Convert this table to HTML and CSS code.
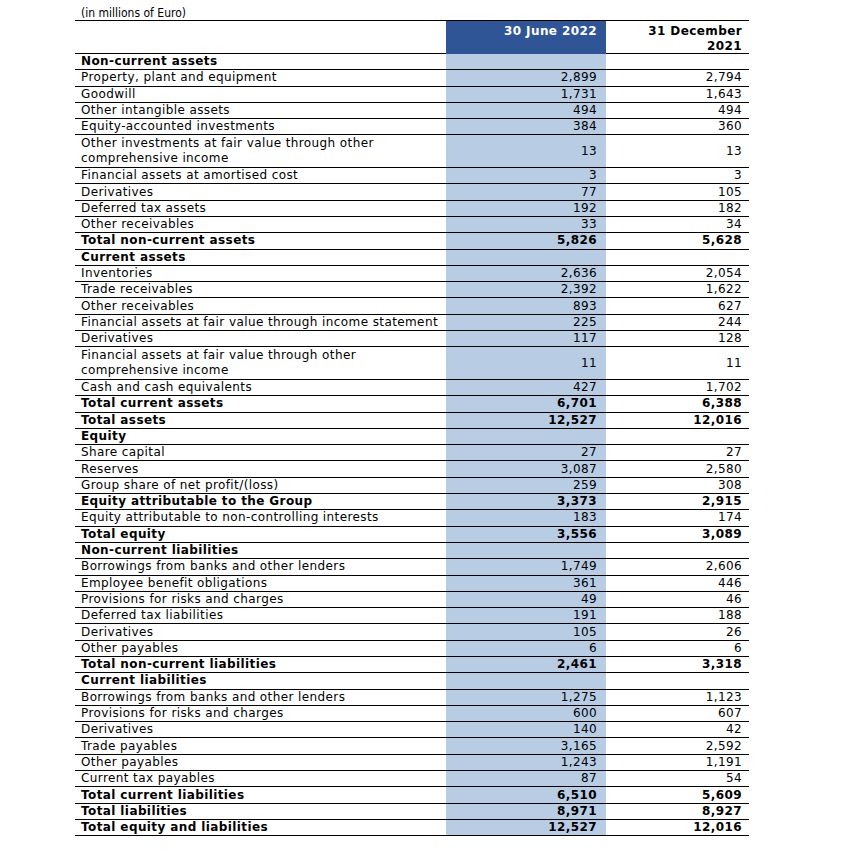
FILE: index.html
```html
<!DOCTYPE html>
<html>
<head>
<meta charset="utf-8">
<link rel="stylesheet" href="styles.css">
</head>
<body>
<div class="page">
  <div class="unit">(in millions of Euro)</div>
  <div class="table">
    <div class="row head">
      <div class="cell label"></div>
      <div class="cell cur hd">30 June 2022</div>
      <div class="cell prev hd">31 December<br>2021</div>
    </div>
    <div class="row b"><div class="cell label">Non-current assets</div><div class="cell cur"></div><div class="cell prev"></div></div>
    <div class="row"><div class="cell label">Property, plant and equipment</div><div class="cell cur">2,899</div><div class="cell prev">2,794</div></div>
    <div class="row"><div class="cell label">Goodwill</div><div class="cell cur">1,731</div><div class="cell prev">1,643</div></div>
    <div class="row"><div class="cell label">Other intangible assets</div><div class="cell cur">494</div><div class="cell prev">494</div></div>
    <div class="row"><div class="cell label">Equity-accounted investments</div><div class="cell cur">384</div><div class="cell prev">360</div></div>
    <div class="row tall"><div class="cell label">Other investments at fair value through other<br>comprehensive income</div><div class="cell cur">13</div><div class="cell prev">13</div></div>
    <div class="row"><div class="cell label">Financial assets at amortised cost</div><div class="cell cur">3</div><div class="cell prev">3</div></div>
    <div class="row"><div class="cell label">Derivatives</div><div class="cell cur">77</div><div class="cell prev">105</div></div>
    <div class="row"><div class="cell label">Deferred tax assets</div><div class="cell cur">192</div><div class="cell prev">182</div></div>
    <div class="row"><div class="cell label">Other receivables</div><div class="cell cur">33</div><div class="cell prev">34</div></div>
    <div class="row b"><div class="cell label">Total non-current assets</div><div class="cell cur">5,826</div><div class="cell prev">5,628</div></div>
    <div class="row b"><div class="cell label">Current assets</div><div class="cell cur"></div><div class="cell prev"></div></div>
    <div class="row"><div class="cell label">Inventories</div><div class="cell cur">2,636</div><div class="cell prev">2,054</div></div>
    <div class="row"><div class="cell label">Trade receivables</div><div class="cell cur">2,392</div><div class="cell prev">1,622</div></div>
    <div class="row"><div class="cell label">Other receivables</div><div class="cell cur">893</div><div class="cell prev">627</div></div>
    <div class="row"><div class="cell label">Financial assets at fair value through income statement</div><div class="cell cur">225</div><div class="cell prev">244</div></div>
    <div class="row"><div class="cell label">Derivatives</div><div class="cell cur">117</div><div class="cell prev">128</div></div>
    <div class="row tall"><div class="cell label">Financial assets at fair value through other<br>comprehensive income</div><div class="cell cur">11</div><div class="cell prev">11</div></div>
    <div class="row"><div class="cell label">Cash and cash equivalents</div><div class="cell cur">427</div><div class="cell prev">1,702</div></div>
    <div class="row b"><div class="cell label">Total current assets</div><div class="cell cur">6,701</div><div class="cell prev">6,388</div></div>
    <div class="row b"><div class="cell label">Total assets</div><div class="cell cur">12,527</div><div class="cell prev">12,016</div></div>
    <div class="row b"><div class="cell label">Equity</div><div class="cell cur"></div><div class="cell prev"></div></div>
    <div class="row"><div class="cell label">Share capital</div><div class="cell cur">27</div><div class="cell prev">27</div></div>
    <div class="row"><div class="cell label">Reserves</div><div class="cell cur">3,087</div><div class="cell prev">2,580</div></div>
    <div class="row"><div class="cell label">Group share of net profit/(loss)</div><div class="cell cur">259</div><div class="cell prev">308</div></div>
    <div class="row b"><div class="cell label">Equity attributable to the Group</div><div class="cell cur">3,373</div><div class="cell prev">2,915</div></div>
    <div class="row"><div class="cell label">Equity attributable to non-controlling interests</div><div class="cell cur">183</div><div class="cell prev">174</div></div>
    <div class="row b"><div class="cell label">Total equity</div><div class="cell cur">3,556</div><div class="cell prev">3,089</div></div>
    <div class="row b"><div class="cell label">Non-current liabilities</div><div class="cell cur"></div><div class="cell prev"></div></div>
    <div class="row"><div class="cell label">Borrowings from banks and other lenders</div><div class="cell cur">1,749</div><div class="cell prev">2,606</div></div>
    <div class="row"><div class="cell label">Employee benefit obligations</div><div class="cell cur">361</div><div class="cell prev">446</div></div>
    <div class="row"><div class="cell label">Provisions for risks and charges</div><div class="cell cur">49</div><div class="cell prev">46</div></div>
    <div class="row"><div class="cell label">Deferred tax liabilities</div><div class="cell cur">191</div><div class="cell prev">188</div></div>
    <div class="row"><div class="cell label">Derivatives</div><div class="cell cur">105</div><div class="cell prev">26</div></div>
    <div class="row"><div class="cell label">Other payables</div><div class="cell cur">6</div><div class="cell prev">6</div></div>
    <div class="row b"><div class="cell label">Total non-current liabilities</div><div class="cell cur">2,461</div><div class="cell prev">3,318</div></div>
    <div class="row b"><div class="cell label">Current liabilities</div><div class="cell cur"></div><div class="cell prev"></div></div>
    <div class="row"><div class="cell label">Borrowings from banks and other lenders</div><div class="cell cur">1,275</div><div class="cell prev">1,123</div></div>
    <div class="row"><div class="cell label">Provisions for risks and charges</div><div class="cell cur">600</div><div class="cell prev">607</div></div>
    <div class="row"><div class="cell label">Derivatives</div><div class="cell cur">140</div><div class="cell prev">42</div></div>
    <div class="row"><div class="cell label">Trade payables</div><div class="cell cur">3,165</div><div class="cell prev">2,592</div></div>
    <div class="row"><div class="cell label">Other payables</div><div class="cell cur">1,243</div><div class="cell prev">1,191</div></div>
    <div class="row"><div class="cell label">Current tax payables</div><div class="cell cur">87</div><div class="cell prev">54</div></div>
    <div class="row b"><div class="cell label">Total current liabilities</div><div class="cell cur">6,510</div><div class="cell prev">5,609</div></div>
    <div class="row b"><div class="cell label">Total liabilities</div><div class="cell cur">8,971</div><div class="cell prev">8,927</div></div>
    <div class="row b"><div class="cell label">Total equity and liabilities</div><div class="cell cur">12,527</div><div class="cell prev">12,016</div></div>
  </div>
</div>
</body>
</html>
```
FILE: styles.css
```css
html, body {
  margin: 0;
  padding: 0;
  background: #ffffff;
}
.page {
  padding: 0 0 0 75px;
  color: #000;
}
.unit {
  font-family: "DejaVu Sans Condensed", "DejaVu Sans", sans-serif;
  font-size: 12px;
  line-height: 15px;
  padding: 6px 0 0 6px;
  height: 20px;
  box-sizing: border-box;
}
.table {
  width: 674px;
  font-family: "DejaVu Sans", Verdana, sans-serif;
  font-size: 12px;
  line-height: 15px;
  letter-spacing: 0.4px;
  border-top: 1px solid #000;
}
.row {
  display: grid;
  grid-template-columns: 371px 160px 143px;
  height: 16.3px;
  box-sizing: border-box;
  border-bottom: 1px solid #000;
}
.row.tall {
  height: 32.6px;
}
.row.head {
  height: 33px;
}
.row.b {
  font-weight: bold;
}
.cell {
  display: flex;
  align-items: center;
  white-space: nowrap;
}
.label {
  padding-left: 6px;
}
.cur {
  background: #b8cce4;
  justify-content: flex-end;
  padding-right: 9px;
}
.prev {
  justify-content: flex-end;
  padding-right: 7px;
}
.hd {
  font-weight: bold;
  align-items: flex-start;
  text-align: right;
  padding-top: 3px;
}
.cur.hd {
  background: #2f5597;
  color: #fff;
}
```
